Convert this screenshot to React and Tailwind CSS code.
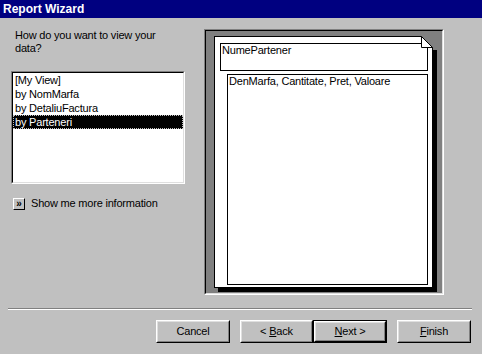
import React from "react";

// Win98-style raised button
function Btn({ children, isDefault, className }) {
  const face = (
    <div className="h-full w-full border border-t-white border-l-white border-r-black border-b-black">
      <div className="h-full w-full border border-t-[#dfdfdf] border-l-[#dfdfdf] border-r-[#808080] border-b-[#808080] flex items-center justify-center">
        {children}
      </div>
    </div>
  );
  return (
    <div className={`h-[23px] ${className}`}>
      {isDefault ? <div className="h-full w-full border border-black">{face}</div> : face}
    </div>
  );
}

const items = ["[My View]", "by NomMarfa", "by DetaliuFactura", "by Parteneri"];

export default function App() {
  const selected = 3;

  return (
    <div className="w-[482px] h-[354px] bg-[#c0c0c0] flex flex-col font-['Liberation_Sans',Arial,sans-serif] text-[11px] leading-[13px] tracking-[-0.2px] text-black overflow-hidden">
      {/* title bar */}
      <div className="h-[18px] bg-[#000080] text-white font-bold text-[12px] tracking-normal pl-[3px] flex items-center">Report Wizard</div>

      <div className="flex h-[277px]">
        {/* left column */}
        <div className="w-[204px] pl-[11px] pt-[11px] flex flex-col">
          <p className="ml-[4px] w-[160px]">How do you want to view your data?</p>

          <div className="mt-[16px] w-[174px] h-[113px] border border-t-[#808080] border-l-[#808080] border-r-white border-b-white">
            <div className="h-full w-full border border-t-black border-l-black border-r-[#dfdfdf] border-b-[#dfdfdf] bg-white">
              {items.map((it, i) => (
                <div
                  key={it}
                  className={
                    i === selected
                      ? "h-[14px] pl-[1px] bg-black text-white border border-dotted border-[#c0c0c0] flex items-center"
                      : "h-[14px] pl-[2px] flex items-center"
                  }
                >
                  {it}
                </div>
              ))}
            </div>
          </div>

          <div className="mt-[13px] ml-[2px] flex items-center">
            <div className="w-[12px] h-[12px] border border-t-white border-l-white border-r-black border-b-black bg-[#c0c0c0] flex items-center justify-center text-[10px] leading-none font-bold">
              »
            </div>
            <span className="ml-[6px]">Show me more information</span>
          </div>
        </div>

        {/* preview panel */}
        <div className="mt-[11px] w-[240px] h-[266px] border border-t-[#808080] border-l-[#808080] border-r-white border-b-white">
          <div className="h-full w-full border border-t-black border-l-black border-r-[#dfdfdf] border-b-[#dfdfdf] bg-[#808080] pl-[8px] pt-[5px]">
            <div className="relative w-[219px] h-[252px] border border-black bg-white shadow-[4px_4px_0_0_#000]">
              <div className="ml-[5px] mt-[6px] w-[208px] h-[28px] border border-black pl-[1px]">NumePartener</div>
              <div className="ml-[12px] mt-[3px] w-[201px] h-[211px] border border-black pl-[1px]">DenMarfa, Cantitate, Pret, Valoare</div>

              {/* folded corner */}
              <svg className="absolute right-[-5px] top-[-1px]" width="16" height="16" viewBox="0 0 16 16">
                <path d="M0 0H16V14H12V12L0 0Z" fill="#808080" />
                <path d="M0.5 0.5V11.5H11.5Z" fill="#ffffff" stroke="#000" strokeWidth="1" />
                <path d="M11.5 11.5V16" stroke="#000" strokeWidth="1" />
                <rect x="12" y="14" width="4" height="2" fill="#000" />
              </svg>
            </div>
          </div>
        </div>
      </div>

      {/* separator */}
      <div className="mt-[13px] ml-[8px] w-[464px] h-[2px] border-t border-t-[#808080] border-b border-b-white" />

      {/* buttons */}
      <div className="mt-[10px] flex pl-[156px]">
        <Btn className="w-[74px]">Cancel</Btn>
        <Btn className="w-[73px] ml-[10px]">
          &lt;&nbsp;<u>B</u>ack
        </Btn>
        <Btn className="w-[74px]" isDefault>
          <u>N</u>ext &gt;
        </Btn>
        <Btn className="w-[74px] ml-[10px]">
          <u>F</u>inish
        </Btn>
      </div>
    </div>
  );
}
